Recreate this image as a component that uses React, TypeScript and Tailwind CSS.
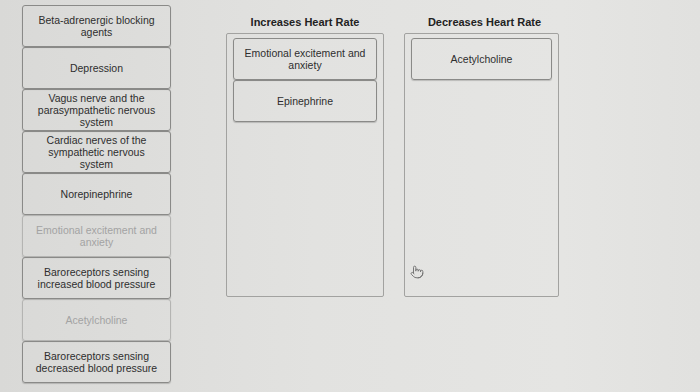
import { Pointer } from "lucide-react";

type CardProps = { text: string; faded?: boolean; className?: string };

function Card({ text, faded, className }: CardProps) {
    return (
        <div
            className={
                "h-[42px] flex items-center justify-center text-center text-[10.5px] leading-[12px] rounded-[3px] border shadow-[0_1px_1px_rgba(0,0,0,0.18)] " +
                (faded ? "border-[#b4b4b2] text-[#a3a3a3] " : "border-[#8a8a88] text-[#2e2e2e] ") +
                (className ?? "")
            }
        >
            {text}
        </div>
    );
}

const sources = [
    { text: "Beta-adrenergic blocking agents" },
    { text: "Depression" },
    { text: "Vagus nerve and the parasympathetic nervous system" },
    { text: "Cardiac nerves of the sympathetic nervous system" },
    { text: "Norepinephrine" },
    { text: "Emotional excitement and anxiety", faded: true },
    { text: "Baroreceptors sensing increased blood pressure" },
    { text: "Acetylcholine", faded: true },
    { text: "Baroreceptors sensing decreased blood pressure" },
];

export default function App() {
    return (
        <div
            className="relative w-[700px] h-[392px] overflow-hidden flex items-start bg-[linear-gradient(90deg,#d9d9d7,#e2e2e0_45%,#e5e5e3_80%,#e1e1df)]"
            style={{ fontFamily: '"Liberation Sans", Arial, sans-serif' }}
        >
            <div className="ml-[22px] mt-[5px] w-[149px] flex flex-col">
                {sources.map((s) => (
                    <Card key={s.text} text={s.text} faded={s.faded} className="px-[12px]" />
                ))}
            </div>

            <div className="ml-[55px] mt-[16px] w-[158px] flex flex-col">
                <div className="text-center text-[11px] leading-[12px] font-bold text-[#222]">Increases Heart Rate</div>
                <div className="mt-[5px] h-[264px] border border-[#a2a2a0] rounded-[2px] px-[6px] pt-[4px] flex flex-col">
                    <Card text="Emotional excitement and anxiety" className="px-[10px] h-[40px]" />
                    <Card text="Epinephrine" className="px-[10px]" />
                </div>
            </div>

            <div className="ml-[20px] mt-[16px] w-[155px] flex flex-col">
                <div className="text-center text-[11px] leading-[12px] font-bold text-[#222] pl-[6px]">Decreases Heart Rate</div>
                <div className="mt-[5px] h-[264px] border border-[#a2a2a0] rounded-[2px] px-[6px] pt-[4px] flex flex-col">
                    <Card text="Acetylcholine" className="px-[10px]" />
                </div>
            </div>

            <Pointer className="absolute left-[410px] top-[265px] text-[#6f6f6f]" size={14} strokeWidth={1.6} />
        </div>
    );
}
